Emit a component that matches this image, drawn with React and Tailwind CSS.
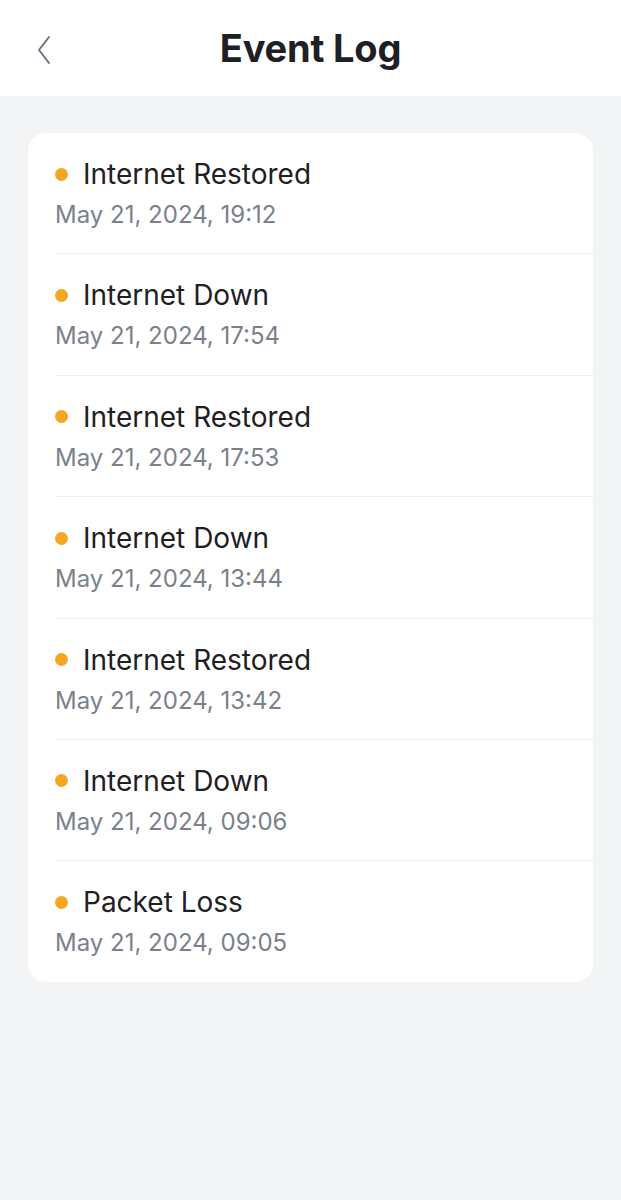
const EVENTS = [
  { title: 'Internet Restored', time: 'May 21, 2024, 19:12' },
  { title: 'Internet Down', time: 'May 21, 2024, 17:54' },
  { title: 'Internet Restored', time: 'May 21, 2024, 17:53' },
  { title: 'Internet Down', time: 'May 21, 2024, 13:44' },
  { title: 'Internet Restored', time: 'May 21, 2024, 13:42' },
  { title: 'Internet Down', time: 'May 21, 2024, 09:06' },
  { title: 'Packet Loss', time: 'May 21, 2024, 09:05' },
]

export default function App() {
  return (
    <div className="min-h-[1200px] bg-[#f3f4f6]" style={{ fontFamily: 'Inter, "Noto Sans", sans-serif' }}>
      <header className="relative flex h-[96px] items-center justify-center bg-white">
        <button className="absolute left-[32px] top-[30px] p-1 text-[#6b7280]">
          <svg width="18" height="32" viewBox="0 0 18 32" fill="none" stroke="currentColor" strokeWidth="2" strokeLinecap="round" strokeLinejoin="round">
            <path d="M13 3 L3 16 L13 29" />
          </svg>
        </button>
        <h1 className="text-[38px] font-bold tracking-[-0.2px] text-[#1f2023]">Event Log</h1>
      </header>

      <div className="px-[28px] pt-[37px]">
        <ul className="overflow-hidden rounded-[18px] bg-white">
          {EVENTS.map((e, i) => (
            <li key={i} className="pl-[27px]">
              <div className={`pt-[22px] pb-[20.4px] ${i < EVENTS.length - 1 ? 'border-b border-[#eeeff1]' : ''}`}>
                <div className="flex h-[38px] items-center">
                  <span className="mr-[15px] h-[13px] w-[13px] rounded-full bg-[#f5a623]" />
                  <span className="text-[28px] text-[#1f2023]">{e.title}</span>
                </div>
                <div className="mt-[4px] h-[36px] text-[24px] leading-[36px] text-[#7b818b]">{e.time}</div>
              </div>
            </li>
          ))}
        </ul>
      </div>
    </div>
  )
}
